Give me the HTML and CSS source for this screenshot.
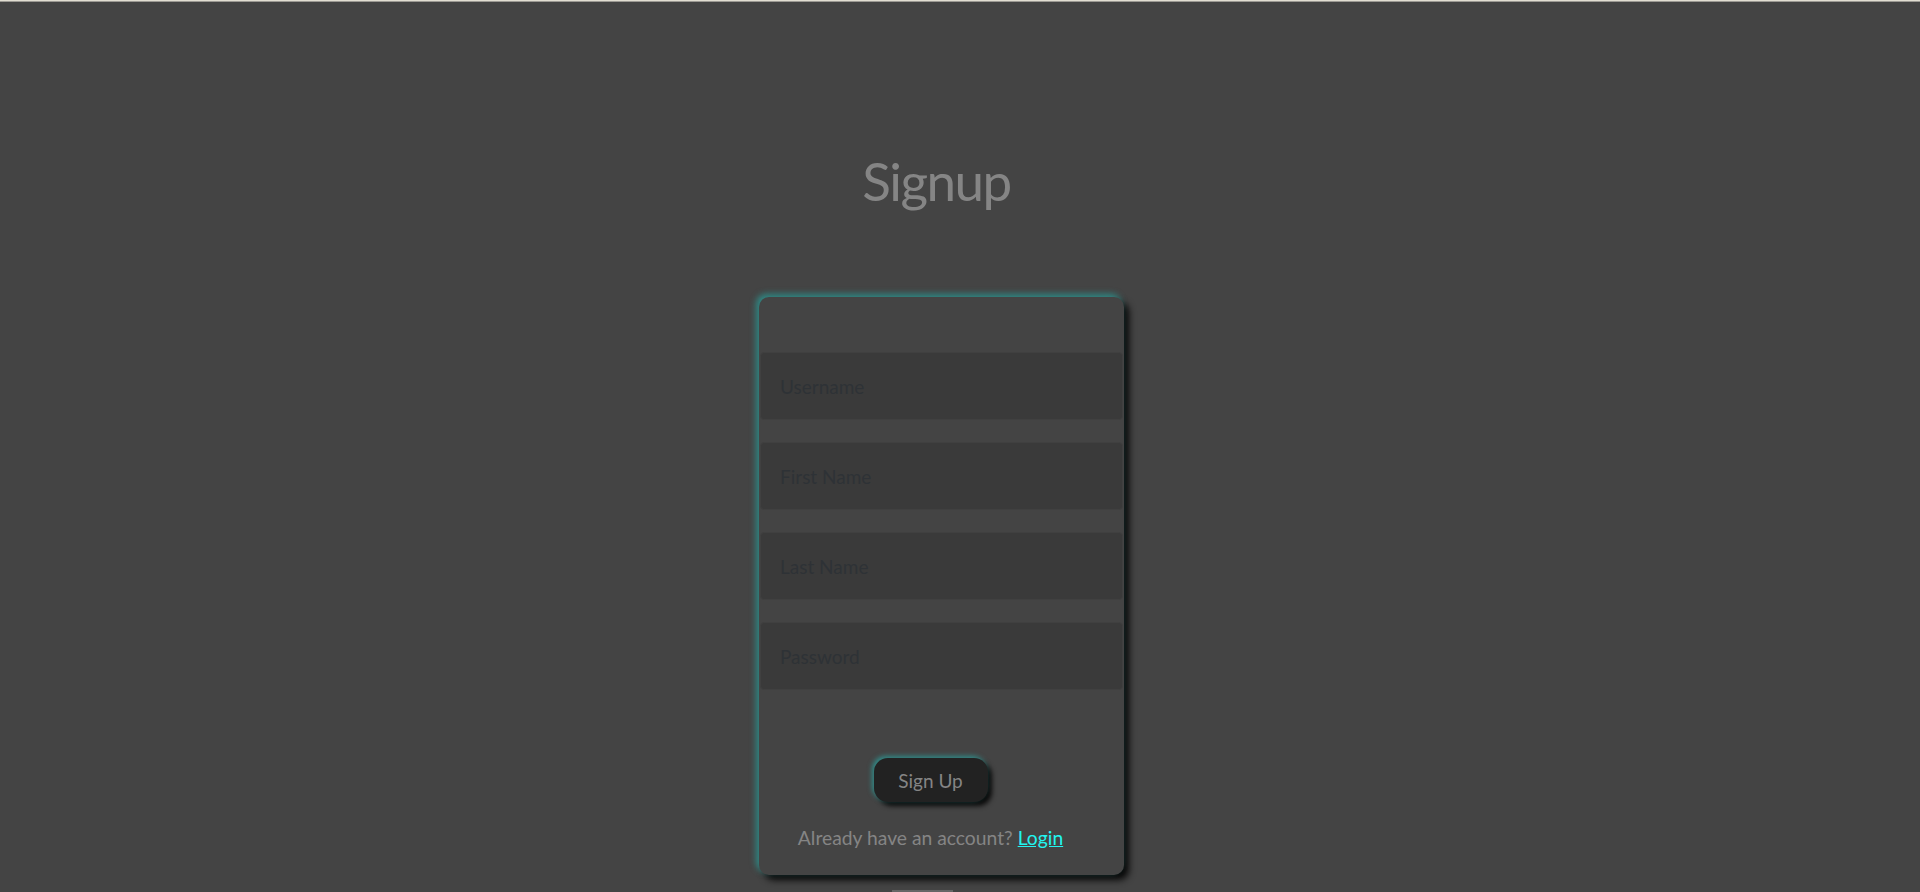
FILE: index.html
```html
<!DOCTYPE html>
<html>
<head>
<meta charset="utf-8">
<link rel="stylesheet" href="styles.css">
</head>
<body>
<div class="topline"></div>
<main class="page">
  <h1 class="title">Signup</h1>
  <form class="card">
    <div class="fields">
      <input class="field" type="text" placeholder="Username">
      <input class="field" type="text" placeholder="First Name">
      <input class="field" type="text" placeholder="Last Name">
      <input class="field" type="password" placeholder="Password">
    </div>
    <div class="actions">
      <button class="btn" type="button">Sign Up</button>
      <p class="alt">Already have an account? <a class="link" href="#">Login</a></p>
    </div>
  </form>
  <div class="stub"></div>
</main>
</body>
</html>
```
FILE: styles.css
```css
html, body {
  margin: 0;
  padding: 0;
  height: 100%;
  overflow: hidden;
}
body {
  background: #444444;
  font-family: "Lato", "Open Sans", sans-serif;
}
.topline {
  height: 2px;
  background: linear-gradient(#e2ded2 0 1px, #9c9a94 1px 2px);
}
.page {
  display: flex;
  flex-direction: column;
  align-items: center;
  padding-right: 37px;
}
.title {
  margin: 144px 0 0 0;
  height: 70px;
  font-size: 53px;
  font-weight: 400;
  line-height: 70px;
  color: #858585;
  letter-spacing: -1.5px;
  position: relative;
  left: -5px;
}
.card {
  margin-top: 81px;
  width: 365px;
  height: 578px;
  box-sizing: border-box;
  background: #444444;
  border-radius: 10px;
  box-shadow: -3px -3px 6px rgba(40, 160, 155, 0.75), 5px 5px 7px rgba(0, 0, 0, 0.9);
  display: flex;
  flex-direction: column;
  padding-top: 55px;
}
.fields {
  display: flex;
  flex-direction: column;
  gap: 22px;
  padding: 0 1px;
}
.field {
  height: 68px;
  box-sizing: border-box;
  background: #3a3a3a;
  border: 1px solid #404040;
  border-radius: 4px;
  padding: 0 19px;
  font-family: inherit;
  font-size: 19px;
  color: #aaa;
  outline: none;
}
.field::placeholder {
  color: #2e3236;
  opacity: 1;
}
.actions {
  display: flex;
  flex-direction: column;
  align-items: center;
  padding-right: 22px;
  margin-top: 68px;
}
.btn {
  width: 114px;
  height: 44px;
  background: #222222;
  border: none;
  border-radius: 14px;
  color: #858585;
  font-family: inherit;
  font-size: 19px;
  box-shadow: -2px -2px 5px rgba(40, 170, 165, 0.7), 4px 4px 5px rgba(0, 0, 0, 0.85);
  padding: 0;
}
.alt {
  margin: 23px 0 0 0;
  font-size: 19.3px;
  color: #858585;
  line-height: 26px;
}
.link {
  color: #22f5f0;
  text-decoration: underline;
}
.stub {
  margin-top: 15px;
  width: 61px;
  height: 4px;
  background: #666666;
  position: relative;
  left: -19px;
}
```
